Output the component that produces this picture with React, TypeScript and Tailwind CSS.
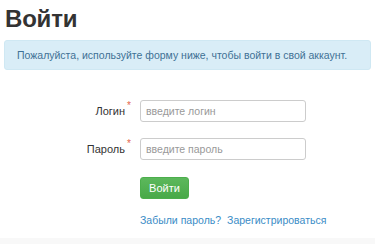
export default function App() {
  return (
    <div className="w-[375px] h-[244px] overflow-hidden bg-white font-['Liberation_Sans',Arial,sans-serif] text-[#333] flex flex-col">
      <h1 className="pl-[5px] pt-[4px] text-[24px] font-bold leading-[29px] tracking-[-0.2px]">Войти</h1>
      <div className="ml-[4px] mr-[4px] mt-[7px] h-[30px] rounded-[3px] border border-[#cfe8f3] bg-[#d9edf7] pl-[12px] text-[10.5px] leading-[28px] text-[#3f7195]">
        Пожалуйста, используйте форму ниже, чтобы войти в свой аккаунт.
      </div>
      <form className="mt-[30px] flex flex-col flex-1">
        <div className="flex items-center h-[22px]">
          <label className="w-[125px] text-right text-[11px] text-[#333]">Логин</label>
          <span className="w-[15px] self-start -mt-[2px] pl-[2px] text-[10px] text-[#e4664d]">*</span>
          <input
            className="h-[22px] w-[166px] rounded-[3px] border border-[#ccc] px-[5px] text-[10.5px] outline-none placeholder:text-[#999]"
            placeholder="введите логин"
          />
        </div>
        <div className="mt-[16px] flex items-center h-[22px]">
          <label className="w-[125px] text-right text-[11px] text-[#333]">Пароль</label>
          <span className="w-[15px] self-start -mt-[2px] pl-[2px] text-[10px] text-[#e4664d]">*</span>
          <input
            type="text"
            className="h-[22px] w-[166px] rounded-[3px] border border-[#ccc] px-[5px] text-[10.5px] outline-none placeholder:text-[#999]"
            placeholder="введите пароль"
          />
        </div>
        <div className="mt-[15px] pl-[140px]">
          <button
            type="button"
            className="h-[22px] w-[49px] rounded-[3px] border border-[#4cae4c] bg-gradient-to-b from-[#5cb85c] to-[#48a948] text-[11px] text-white"
          >
            Войти
          </button>
        </div>
        <div className="mt-[14px] pl-[140px] flex gap-[6px] text-[10.5px] text-[#3a8cc6]">
          <a>Забыли пароль?</a>
          <a>Зарегистрироваться</a>
        </div>
        <div className="mt-auto h-[6px] bg-[#f8f8f8]" />
      </form>
    </div>
  );
}
